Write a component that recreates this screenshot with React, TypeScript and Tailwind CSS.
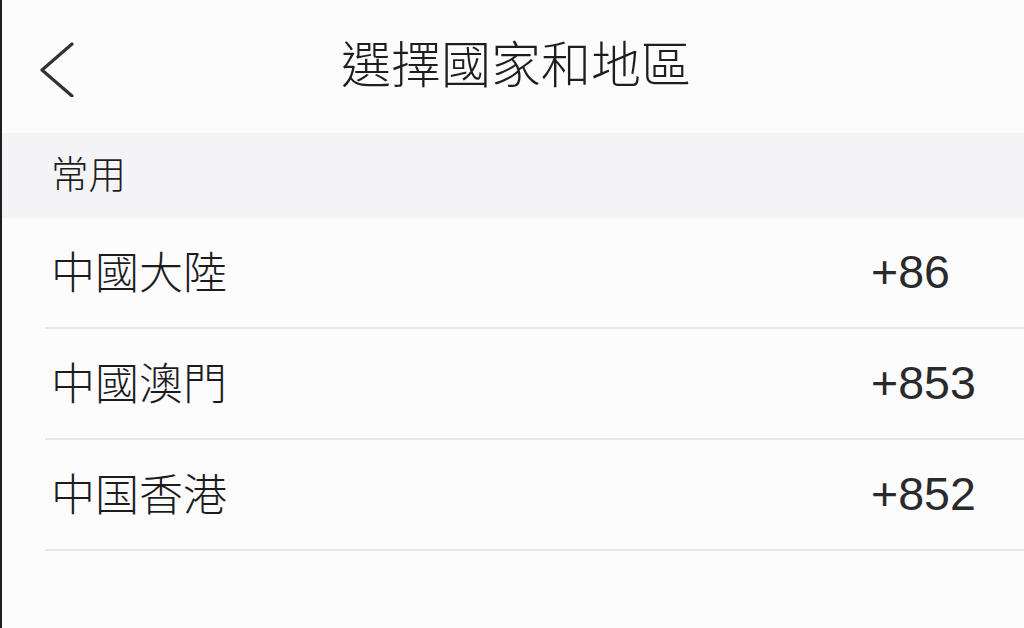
import React from "react";

const rows = [
  { name: "中國大陸", code: "+86" },
  { name: "中國澳門", code: "+853" },
  { name: "中国香港", code: "+852" },
];

export default function App() {
  return (
    <div
      className="w-[1024px] h-[628px] bg-[#fcfcfd] border-l-2 border-[#1f1f1f] text-[#2a2a2c] overflow-hidden"
      style={{ fontFamily: '"Liberation Sans", "Noto Sans CJK TC", sans-serif' }}
    >
      <header className="h-[133px] grid grid-cols-[1fr_auto_1fr] items-center">
        <div className="pl-[36px] flex items-center">
          <svg width="40" height="60" viewBox="0 0 40 60" fill="none">
            <path d="M34 7 L4 33 L34 59" stroke="#333336" strokeWidth="3.2" strokeLinecap="round" strokeLinejoin="round" />
          </svg>
        </div>
        <h1 className="text-[50px] leading-none font-light text-[#1e1e20] pb-[2px] pl-[6px]">選擇國家和地區</h1>
        <div />
      </header>
      <div className="h-[85px] bg-[#f4f3f6] flex items-center pl-[49px]">
        <span className="text-[37.5px] leading-none font-light text-[#1e1e20]">常用</span>
      </div>
      <ul className="ml-[43px]">
        {rows.map((r) => (
          <li
            key={r.code}
            className="h-[111px] grid grid-cols-[1fr_153px] items-center border-b-2 border-[#e6e6e9] pl-[6px]"
          >
            <span className="text-[44px] leading-none font-light pt-[2px] text-[#1c1c1e]">{r.name}</span>
            <span className="text-[46.5px] leading-none">{r.code}</span>
          </li>
        ))}
      </ul>
    </div>
  );
}
